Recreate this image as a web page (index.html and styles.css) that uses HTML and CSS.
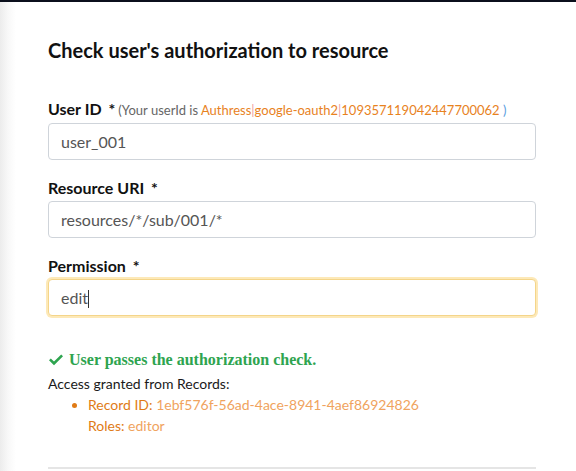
FILE: index.html
```
<!DOCTYPE html>
<html>
<head>
<meta charset="utf-8">
<link rel="stylesheet" href="styles.css">
</head>
<body>
<div class="topbar"></div>
<div class="panel">
  <h2 class="title">Check user's authorization to resource</h2>
  <div class="field">
    <label class="label">User ID <span class="req">*</span><span class="hint">(Your userId is <span class="uid">Authress<span class="pipe">|</span>google-oauth2<span class="pipe">|</span>109357119042447700062</span> <span class="paren">)</span></span></label>
    <div class="input">user_001</div>
  </div>
  <div class="field">
    <label class="label">Resource URI <span class="req">*</span></label>
    <div class="input">resources/*/sub/001/*</div>
  </div>
  <div class="field">
    <label class="label">Permission <span class="req">*</span></label>
    <div class="input focus">edit<span class="caret"></span></div>
  </div>
  <div class="result">
    <div class="success"><svg class="check" viewBox="0 0 16 12" width="16" height="12"><path d="M1 6.2 L2.8 4.4 L6 7.5 L13.2 0.4 L15 2.2 L6 11.2 Z" fill="#2ea44f"/></svg>User passes the authorization check.</div>
    <div class="granted">Access granted from Records:</div>
    <ul class="records">
      <li><span class="key">Record ID:</span> <span class="val">1ebf576f-56ad-4ace-8941-4aef86924826</span><br><span class="key">Roles:</span> <span class="val">editor</span></li>
    </ul>
  </div>
  <hr class="rule">
</div>
</body>
</html>
```
FILE: styles.css
```
html, body {
  margin: 0;
  padding: 0;
  height: 100%;
}
body {
  font-family: Lato, "Liberation Sans", sans-serif;
  background: linear-gradient(to right, #ececec 0px, #f8f8f8 8px, #ffffff 16px);
  color: #1a1a1a;
  overflow: hidden;
}
.topbar {
  height: 2px;
  background: #0b0f1c;
}
.panel {
  padding: 0 40px 0 48px;
}
.title {
  margin: 0;
  padding-top: 34px;
  font-size: 20px;
  font-weight: 700;
  line-height: 28px;
  color: #111;
}
.field:first-of-type {
  margin-top: 35px;
}
.label {
  display: block;
  font-size: 16px;
  font-weight: 700;
  line-height: 20px;
  color: #111;
  margin-bottom: 3px;
  white-space: nowrap;
}
.req {
  margin-left: 3px;
  font-weight: 700;
}
.hint {
  font-size: 13px;
  font-weight: 400;
  color: #666;
  margin-left: 3px;
}
.uid { color: #e8821e; }
.pipe { color: #f0a0a0; }
.paren { color: #5b9ee0; }
.input {
  box-sizing: border-box;
  height: 37px;
  border: 1px solid #cfd4da;
  border-radius: 4px;
  padding: 0 12px;
  font-size: 16px;
  line-height: 35px;
  color: #555;
  margin-bottom: 18px;
  background: #fff;
}
.input.focus {
  border: 1px solid #f4d58a;
  box-shadow: 0 0 0 2px #fde9b8;
}
.caret {
  display: inline-block;
  width: 1px;
  height: 18px;
  background: #333;
  vertical-align: -4px;
}
.result {
  margin-top: 34px;
}
.success {
  font-family: "Liberation Serif", serif;
  font-weight: 700;
  font-size: 16px;
  color: #2ea44f;
  line-height: 20px;
  display: flex;
  align-items: center;
}
.check {
  margin-right: 5px;
}
.granted {
  font-size: 14px;
  line-height: 20px;
  margin-top: 4px;
  color: #1a1a1a;
}
.records {
  margin: 0;
  padding-left: 40px;
  font-size: 14px;
  line-height: 21px;
  color: #e07b16;
}
.records li::marker {
  color: #e07b16;
}
.key { color: #e07b16; }
.val { color: #f0a35e; }
.rule {
  border: 0;
  border-top: 2px solid #e5e5e5;
  margin: 31px 0 0 0;
}
```
